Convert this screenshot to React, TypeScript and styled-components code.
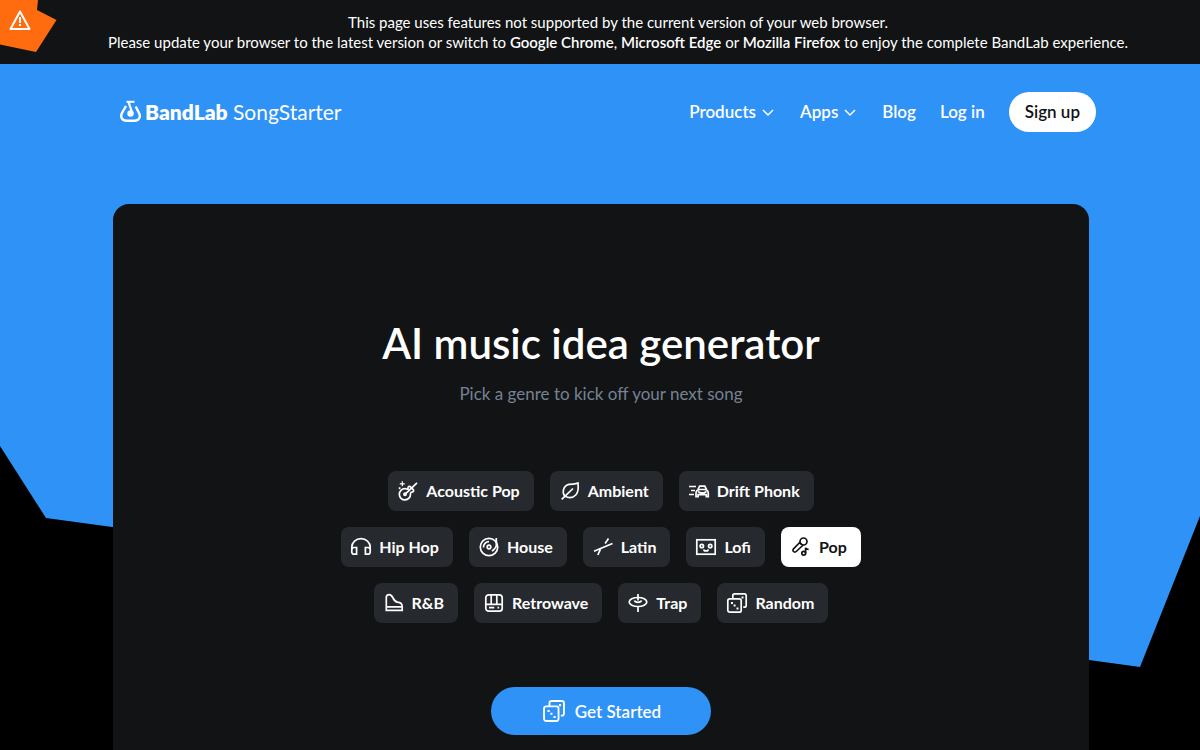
import React from "react";
import styled, { createGlobalStyle } from "styled-components";

const GlobalStyle = createGlobalStyle`
  * { box-sizing: border-box; }
  body {
    margin: 0;
    background: #000;
    color: #fff;
    font-family: Lato, "Liberation Sans", sans-serif;
    -webkit-font-smoothing: antialiased;
  }
`;

const Page = styled.div`
  display: flex;
  flex-direction: column;
  min-height: 100vh;
`;

const Banner = styled.aside`
  position: relative;
  padding: 12px 0 12px 36px;
  background: #111314;
  font-size: 15px;
  line-height: 20px;
  text-align: center;

  b {
    font-weight: 600;
  }
`;

const BannerLine = styled.p`
  margin: 0;
`;

const WarningBadge = styled.svg`
  position: absolute;
  top: 0;
  left: 0;
`;

const Hero = styled.div`
  position: relative;
  isolation: isolate;
  flex: 1;
  display: flex;
  flex-direction: column;
`;

const Backdrop = styled.div`
  position: absolute;
  inset: 0;
  z-index: -1;
  background: #2f92f6;
  clip-path: polygon(0 0, 100% 0, 100% 452px, 95% 603px, 46px 454px, 0 382px);
`;

const Header = styled.header`
  display: flex;
  align-items: center;
  justify-content: space-between;
  width: 100%;
  max-width: 1200px;
  margin: 0 auto;
  padding: 28px 104px 28px 120px;
`;

const Brand = styled.a`
  display: flex;
  align-items: center;
  gap: 4px;
  color: #fff;
  font-size: 21px;
  line-height: 24px;
  text-decoration: none;

  b {
    font-weight: 800;
  }
`;

const Nav = styled.nav`
  display: flex;
  align-items: center;
  gap: 24px;
`;

const navText = `
  font-family: inherit;
  font-size: 17px;
  font-weight: 600;
  line-height: 24px;
`;

const NavLink = styled.a`
  ${navText}
  color: #fff;
  text-decoration: none;
`;

const NavMenu = styled.button`
  ${navText}
  display: flex;
  align-items: center;
  gap: 4px;
  padding: 0;
  border: 0;
  background: none;
  color: #fff;
`;

const SignUp = styled.a`
  ${navText}
  padding: 8px 16px;
  border-radius: 20px;
  background: #fff;
  color: #111314;
  text-decoration: none;
`;

const Main = styled.main`
  flex: 1;
  display: flex;
  justify-content: center;
  padding: 44px 0 0 2px;
`;

const Card = styled.section`
  display: flex;
  flex-direction: column;
  align-items: center;
  width: 100%;
  max-width: 976px;
  padding: 111px 24px 15px;
  border-radius: 16px 16px 0 0;
  background: #111314;
`;

const Title = styled.h1`
  margin: 0;
  font-size: 42px;
  font-weight: 600;
  line-height: 56px;
`;

const Subtitle = styled.p`
  margin: 11px 0 65px;
  color: #768295;
  font-size: 17px;
  line-height: 24px;
`;

const Genres = styled.div`
  display: flex;
  flex-direction: column;
  gap: 16px;
`;

const GenreRow = styled.div`
  display: flex;
  flex-wrap: wrap;
  justify-content: center;
  gap: 16px;
`;

const GenreChip = styled.button<{ $selected: boolean }>`
  display: flex;
  align-items: center;
  gap: 6px;
  height: 40px;
  padding: 0 14px 0 8px;
  border: 0;
  border-radius: 8px;
  background: ${(p) => (p.$selected ? "#fff" : "#26292e")};
  color: ${(p) => (p.$selected ? "#111314" : "#fff")};
  font-family: inherit;
  font-size: 16px;
  font-weight: 700;
  line-height: 24px;
`;

const StartButton = styled.button`
  display: flex;
  align-items: center;
  justify-content: center;
  gap: 8px;
  width: 220px;
  height: 48px;
  margin-top: 64px;
  border: 0;
  border-radius: 24px;
  background: #2f92f6;
  color: #fff;
  font-family: inherit;
  font-size: 17px;
  font-weight: 600;
`;

const Icon = ({ children, size = 24 }: { children: React.ReactNode; size?: number }) => (
  <svg
    width={size}
    height={size}
    viewBox="0 0 24 24"
    fill="none"
    stroke="currentColor"
    strokeWidth="1.7"
    aria-hidden="true"
  >
    {children}
  </svg>
);

const Dice = ({ size = 24 }: { size?: number }) => (
  <Icon size={size}>
    <rect x="2.8" y="7.8" width="13.4" height="13.4" rx="2" />
    <path d="M7.8 8V4.800a2 2 0 0 1 2-2h9.400a2 2 0 0 1 2 2v9.400a2 2 0 0 1-2 2h-.9" />
    <path
      fill="currentColor"
      stroke="none"
      d="M6 11h2v2H6zM8.600 13.500h2v2h-2zM11.500 16.500h2v2h-2zM16.500 5.500h2v2h-2z"
    />
  </Icon>
);

const Chevron = () => (
  <svg width="16" height="16" viewBox="0 0 16 16" fill="none" stroke="currentColor" strokeWidth="1.5" aria-hidden="true">
    <path d="M3 6l5 5 5-5" />
  </svg>
);

const icons: Record<string, React.ReactNode> = {
  "Acoustic Pop": (
    <Icon>
      <path d="M12.2 10c-.9-1 .3-3.200 1.800-2.500l3.400 3.300c.7 1.400-.4 2.300-1.500 2.200-1 0-1.400.7-1.400 2.100A5.600 5.600 0 1 1 9 9.700c1.500 0 2.300.8 3.200.3z" />
      <path d="M10 14.300L21 3.900" />
      <circle cx="9" cy="15.200" r="1.100" />
      <path d="M6.300 2.300v5M3.800 4.800h5M3.600 8.200v2M2.600 9.200h2" strokeWidth="1.200" />
    </Icon>
  ),
  Ambient: (
    <Icon>
      <path d="M7 17.300C3.600 13.500 5.300 6.600 11 5.400c3.400-.7 6.500.2 9-1.300.5 4.200.7 8.600-2 11.600-2.700 3-7.200 3.400-11 1.600z" />
      <path d="M3.700 20.300L15 9.500" />
    </Icon>
  ),
  "Drift Phonk": (
    <Icon>
      <path d="M2 7.500h7M4 11.500h4M2 15.500h5M11 10.500l1.600-3.300h5.200l1.700 3.300" />
      <path d="M9 17.600v-3c0-2.800 1.600-4.100 4-4.100h4.500c2.400 0 3.800 1.300 3.800 4.100v3h-2v-2h-8.200v2H9zM11 12.500l2.300 1.300h4l2.200-1.300" />
    </Icon>
  ),
  "Hip Hop": (
    <Icon>
      <path d="M2.800 14.500V12.200a9.200 8.600 0 0 1 18.400 0v2.300" />
      <path d="M7.600 12.500v6.700H5a2.200 2.200 0 0 1-2.200-2.200v-2.300a2.200 2.200 0 0 1 2.200-2.200zM16.400 12.500v6.700H19a2.200 2.200 0 0 0 2.200-2.200v-2.300a2.200 2.200 0 0 0-2.200-2.200z" />
    </Icon>
  ),
  House: (
    <Icon>
      <circle cx="12" cy="12" r="8.700" />
      <circle cx="12" cy="12" r="1.800" />
      <path d="M6.500 12.500A5.500 5.500 0 0 1 12 6.700M19.300 3v7.500c0 2-1.500 3.200-4.300 5.700" />
    </Icon>
  ),
  Latin: (
    <Icon>
      <path d="M3 16.200l18.500-7.700M17.500 3.500l-3.400 5M9.500 14.200L6.800 20" />
    </Icon>
  ),
  Lofi: (
    <Icon>
      <rect x="2.800" y="4.800" width="18.400" height="14.400" />
      <circle cx="7.800" cy="11" r="1.700" />
      <circle cx="16.200" cy="11" r="1.700" />
      <path d="M9.500 14.500l1 1.300h3l1-1.300" />
    </Icon>
  ),
  Pop: (
    <Icon>
      <circle cx="14.500" cy="6.500" r="3.500" />
      <path d="M11.200 7l-6.700 6.800a1.900 1.900 0 0 0 2.700 2.700L14.200 10M10.800 7.500l2.800 2.800" />
      <circle cx="14.700" cy="18.300" r="1.900" />
      <path d="M16.600 18.300v-5.500c.5 1.400 1.400 1.600 3 1.600" />
    </Icon>
  ),
  "R&B": (
    <Icon>
      <path d="M4.300 19.300V6.500c0-1.700 1.200-2.800 2.900-2.800 2 0 2.800 1.300 3.800 3.300 1.500 3 2.200 3.900 4.500 4.200 3 .3 4.700 1.400 4.700 4.500v3.600H4.300zM4.300 15.800h16" />
    </Icon>
  ),
  Retrowave: (
    <Icon>
      <rect x="3.800" y="3.800" width="16.400" height="16.400" rx="3" />
      <path d="M3.800 13.300h16.400M9.200 4v9.300M14.800 4v9.300M7 16.700h5.300M15.500 16.700h1.600" />
    </Icon>
  ),
  Trap: (
    <Icon>
      <ellipse cx="12" cy="11" rx="8.800" ry="4.500" />
      <path d="M12 3v6.500M12 15.500V21M8.500 9.500c.6 2.400 6.400 2.400 7 0" />
    </Icon>
  ),
  Random: <Dice />,
};

const rows = [
  ["Acoustic Pop", "Ambient", "Drift Phonk"],
  ["Hip Hop", "House", "Latin", "Lofi", "Pop"],
  ["R&B", "Retrowave", "Trap", "Random"],
];

export default function App() {
  const [genre, setGenre] = React.useState("Pop");
  return (
    <Page>
      <GlobalStyle />
      <Banner>
        <WarningBadge width="57" height="53" viewBox="0 0 57 53" aria-hidden="true">
          <path d="M0 0h38l-1 10 19.500 10L36 52 0 44.500z" fill="#ff6c10" />
          <path d="M20 11.500l9.500 17.500h-19z" fill="none" stroke="#fff" strokeWidth="2" strokeLinejoin="round" />
          <path d="M19 17h2v6h-2zM19 24h2v2h-2z" fill="#fff" />
        </WarningBadge>
        <BannerLine>This page uses features not supported by the current version of your web browser.</BannerLine>
        <BannerLine>
          Please update your browser to the latest version or switch to <b>Google Chrome</b>, <b>Microsoft Edge</b> or{" "}
          <b>Mozilla Firefox</b> to enjoy the complete BandLab experience.
        </BannerLine>
      </Banner>
      <Hero>
        <Backdrop />
        <Header>
          <Brand href="#">
            <svg width="21" height="24" viewBox="0 0 21 24" fill="none" stroke="currentColor" strokeWidth="2.400" aria-hidden="true">
              <path d="M6 6L2 13c-2 4 0 7.800 4.500 7.800h8c4.500 0 6.500-3.800 4.500-7.800L15.700 6.500" />
              <path d="M6.500 1.800h8" strokeWidth="2" />
              <path d="M8.300 1.500l4.200 12" strokeWidth="2.200" />
              <circle cx="10.500" cy="13.500" r="3.200" fill="currentColor" stroke="none" />
            </svg>
            <span>
              <b>BandLab</b> SongStarter
            </span>
          </Brand>
          <Nav>
            <NavMenu type="button">
              Products <Chevron />
            </NavMenu>
            <NavMenu type="button">
              Apps <Chevron />
            </NavMenu>
            <NavLink href="#">Blog</NavLink>
            <NavLink href="#">Log in</NavLink>
            <SignUp href="#">Sign up</SignUp>
          </Nav>
        </Header>
        <Main>
          <Card>
            <Title>AI music idea generator</Title>
            <Subtitle>Pick a genre to kick off your next song</Subtitle>
            <Genres>
              {rows.map((row) => (
                <GenreRow key={row[0]}>
                  {row.map((name) => (
                    <GenreChip
                      key={name}
                      type="button"
                      $selected={name === genre}
                      aria-pressed={name === genre}
                      onClick={() => setGenre(name)}
                    >
                      {icons[name]}
                      {name}
                    </GenreChip>
                  ))}
                </GenreRow>
              ))}
            </Genres>
            <StartButton type="button">
              <Dice size={26} />
              Get Started
            </StartButton>
          </Card>
        </Main>
      </Hero>
    </Page>
  );
}
